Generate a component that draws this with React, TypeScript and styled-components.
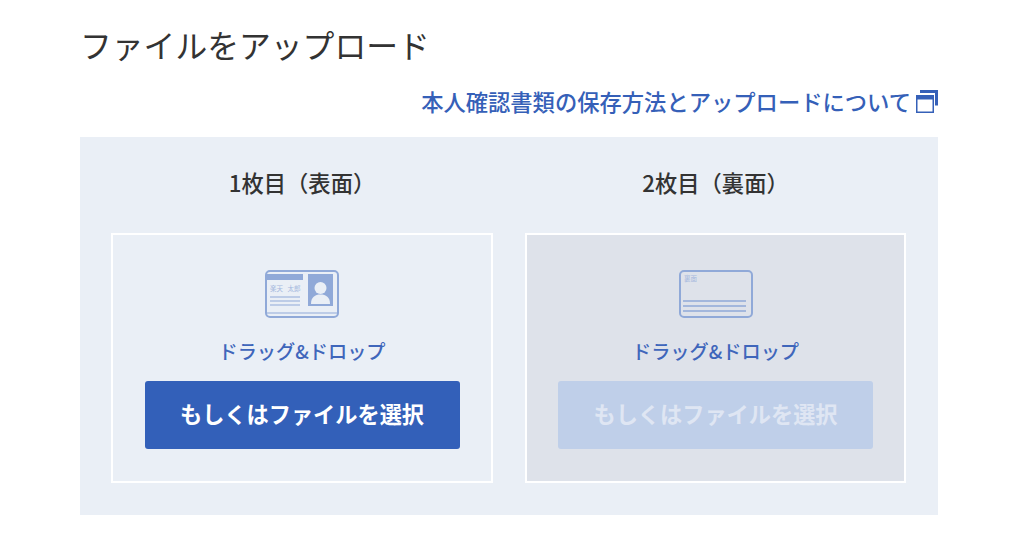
import React from "react";
import styled, { createGlobalStyle } from "styled-components";

const Global = createGlobalStyle`
  html, body { margin: 0; padding: 0; background: #fff; }
  body { font-family: "Noto Sans CJK JP", "Noto Sans", sans-serif; }
`;

const Page = styled.div`
  width: 1024px;
  height: 537px;
  box-sizing: border-box;
  padding: 24px 86px 0 80px;
  overflow: hidden;
`;

const Title = styled.h1`
  margin: 0;
  font-size: 31.8px;
  line-height: 40px;
  font-weight: 400;
  color: #333;
`;

const LinkRow = styled.div`
  display: flex;
  justify-content: flex-end;
  align-items: center;
  gap: 5px;
  margin-top: 20px;
  height: 34px;
`;

const LinkText = styled.a`
  font-size: 22.3px;
  line-height: 34px;
  font-weight: 500;
  color: #3560b8;
  white-space: nowrap;
`;

const Panel = styled.section`
  margin-top: 19px;
  height: 378px;
  background: #eaeff6;
  padding: 29px 32px 32px 31px;
  box-sizing: border-box;
  display: grid;
  grid-template-columns: 382px 381px;
  column-gap: 32px;
`;

const Column = styled.div`
  display: flex;
  flex-direction: column;
  align-items: center;
`;

const Heading = styled.h2`
  margin: 0;
  height: 67px;
  font-size: 22.3px;
  line-height: 32px;
  font-weight: 500;
  color: #333;
`;

const Card = styled.div<{ $disabled?: boolean }>`
  width: 100%;
  height: 250px;
  box-sizing: border-box;
  border: 2px solid #fff;
  background: ${(p) => (p.$disabled ? "#dee2ea" : "#eaeff6")};
  display: flex;
  flex-direction: column;
  align-items: center;
  padding-top: 35px;
`;

const Art = styled.svg`
  display: block;
  width: 74px;
  height: 48px;
`;

const DropLabel = styled.div`
  margin-top: 19px;
  font-size: 19.2px;
  line-height: 28px;
  font-weight: 500;
  color: #3f66bb;
`;

const SelectButton = styled.button<{ $disabled?: boolean }>`
  margin-top: 16px;
  width: 315px;
  height: 68px;
  border: 0;
  border-radius: 3px;
  padding: 0 0 4px;
  background: ${(p) => (p.$disabled ? "#bfcfe9" : "#3360b9")};
  color: ${(p) => (p.$disabled ? "#dfe6f3" : "#fff")};
  font-family: inherit;
  font-size: 22.2px;
  font-weight: 700;
`;

const FrontArt = () => (
  <Art viewBox="0 0 74 48">
    <rect x="1" y="1" width="72" height="46" rx="4" fill="none" stroke="#90a9d8" strokeWidth="2" />
    <rect x="1" y="4" width="37" height="6" fill="#90a9d8" />
    <rect x="43" y="4" width="25" height="32" fill="#90a9d8" />
    <circle cx="55.5" cy="18" r="6" fill="#eaeff6" />
    <path d="M46 34c0-7 4-9.500 9.500-9.500S65 27 65 34z" fill="#eaeff6" />
    <text x="5" y="21" fontSize="6.500" wordSpacing="3" fill="#a5b8de" fontFamily="Noto Sans CJK JP">楽天 太郎</text>
    <path d="M5 27h30M5 31h30M5 35h30" stroke="#90a9d8" strokeWidth="1.200" />
    <path d="M2 43h70" stroke="#90a9d8" strokeWidth="1" />
  </Art>
);

const BackArt = () => (
  <Art viewBox="0 0 74 48">
    <rect x="1" y="1" width="72" height="46" rx="4" fill="none" stroke="#90a9d8" strokeWidth="2" />
    <text x="5" y="11" fontSize="6.500" fill="#a5b8de" fontFamily="Noto Sans CJK JP">裏面</text>
    <path d="M4 31h63M4 36h63M4 41h63" stroke="#90a9d8" strokeWidth="1.500" />
  </Art>
);

const WindowIcon = () => (
  <svg width="22" height="23" viewBox="0 0 22 23" style={{ display: "block" }}>
    <path d="M4 1.500h16.500v14" fill="none" stroke="#3560b8" strokeWidth="3" />
    <rect x="0.750" y="5.750" width="16.500" height="16.500" fill="none" stroke="#3560b8" strokeWidth="1.500" />
    <rect x="0" y="5" width="18" height="4.500" fill="#3560b8" />
  </svg>
);

export default function App() {
  return (
    <Page>
      <Global />
      <Title>ファイルをアップロード</Title>
      <LinkRow>
        <LinkText>本人確認書類の保存方法とアップロードについて</LinkText>
        <WindowIcon />
      </LinkRow>
      <Panel>
        <Column>
          <Heading>1枚目（表面）</Heading>
          <Card>
            <FrontArt />
            <DropLabel>ドラッグ&amp;ドロップ</DropLabel>
            <SelectButton>もしくはファイルを選択</SelectButton>
          </Card>
        </Column>
        <Column>
          <Heading>2枚目（裏面）</Heading>
          <Card $disabled>
            <BackArt />
            <DropLabel>ドラッグ&amp;ドロップ</DropLabel>
            <SelectButton $disabled>もしくはファイルを選択</SelectButton>
          </Card>
        </Column>
      </Panel>
    </Page>
  );
}
